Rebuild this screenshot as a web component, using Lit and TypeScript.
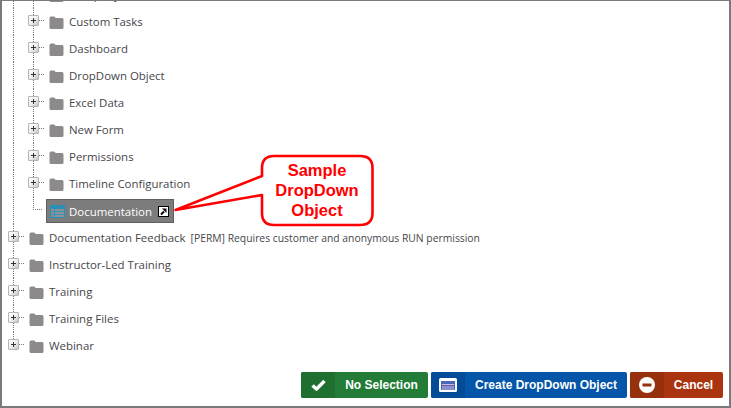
import { LitElement, html, css, svg } from "lit";
import { customElement } from "lit/decorators.js";

const folder = svg`<svg class="folder" width="15" height="13" viewBox="0 0 15 13"><path d="M0.5 2 Q0.5 0.5 2 0.5 H5 Q6 0.5 6.5 2 H13 Q14.5 2 14.5 3.5 V11.5 Q14.5 13 13 13 H2 Q0.5 13 0.5 11.5 Z" fill="#8c8a8b"/></svg>`;

type Row = { label: string; level: 0 | 1; note?: string; last?: boolean };

const rows: Row[] = [
  { label: "Company", level: 1 },
  { label: "Custom Tasks", level: 1 },
  { label: "Dashboard", level: 1 },
  { label: "DropDown Object", level: 1 },
  { label: "Excel Data", level: 1 },
  { label: "New Form", level: 1 },
  { label: "Permissions", level: 1 },
  { label: "Timeline Configuration", level: 1 },
];
const topRows: Row[] = [
  { label: "Documentation Feedback", level: 0, note: "[PERM] Requires customer and anonymous RUN permission" },
  { label: "Instructor-Led Training", level: 0 },
  { label: "Training", level: 0 },
  { label: "Training Files", level: 0 },
  { label: "Webinar", level: 0, last: true },
];

@customElement("app-root")
export class AppRoot extends LitElement {
  static styles = css`
    :host { display: block; width: 731px; height: 408px; }
    .frame {
      box-sizing: border-box; width: 731px; height: 408px; background: #fff; overflow: hidden;
      border: solid #7a7a7a; border-width: 1px 2px 2px 2px;
      position: relative; display: flex; flex-direction: column;
      font-family: "Open Sans", "Noto Sans", sans-serif; font-size: 11.45px; color: #46464a;
    }
    .tree { flex: 1; margin: -20px 0 0 -1px; }
    .row { display: flex; align-items: center; height: 27px; }
    .guide { width: 20px; height: 27px; flex: none; box-sizing: border-box; }
    .line {
      background-image: repeating-linear-gradient(to bottom, #777 0 1px, transparent 1px 2px);
      background-repeat: no-repeat; background-size: 1px 100%; background-position: 12px 0;
    }
    .conn {
      position: relative; flex: none; width: 28px; height: 27px;
      background-image:
        repeating-linear-gradient(to bottom, #777 0 1px, transparent 1px 2px),
        repeating-linear-gradient(to right, #777 0 1px, transparent 1px 2px);
      background-repeat: no-repeat;
      background-size: 1px 100%, 12px 1px;
      background-position: 12px 0, 12px 12px;
    }
    .conn.last { background-size: 1px 13px, 12px 1px; }
    .exp {
      position: absolute; left: 7px; top: 7px; width: 11px; height: 11px; box-sizing: border-box;
      border: 1px solid #b5b5b5; border-radius: 1px;
      background: linear-gradient(135deg, #ffffff 0%, #f0f0f0 50%, #c4c4c4 100%);
    }
    .exp::before { content: ""; position: absolute; left: 2px; top: 4px; width: 5px; height: 1px; background: #333; }
    .exp::after { content: ""; position: absolute; left: 4px; top: 2px; width: 1px; height: 5px; background: #333; }
    .folder { flex: none; margin: 1px 5px 0 0; display: block; }
    .label { white-space: nowrap; }
    .note { margin-left: 5px; font-size: 10.35px; white-space: nowrap; }

    .sel {
      display: flex; align-items: center; box-sizing: border-box; height: 24px; width: 128px;
      align-self: flex-start; margin: 2px 0 0 4px; padding-left: 3px;
      background: #7c7c7c; border: 1px solid #5f5f5f; color: #fff; flex: none;
    }
    .sel .tbl { margin-right: 4px; flex: none; display: block; }
    .sel .sc { margin-left: 6px; flex: none; display: block; }
    .elbow {
      flex: none; width: 21px; height: 27px;
      background-image:
        repeating-linear-gradient(to bottom, #777 0 1px, transparent 1px 2px),
        repeating-linear-gradient(to right, #777 0 1px, transparent 1px 2px);
      background-repeat: no-repeat;
      background-size: 1px 13px, 12px 1px;
      background-position: 12px 0, 12px 12px;
    }

    .bar { display: flex; justify-content: flex-end; gap: 3px; padding: 0 6px 8px 0; flex: none; }
    .btn {
      display: flex; align-items: stretch; height: 26px; border-radius: 2px; overflow: hidden;
      font: bold 12px "Liberation Sans", Arial, sans-serif; color: #fff;
    }
    .ic { width: 34px; display: flex; align-items: center; justify-content: center; flex: none; }
    .tx { flex: 1; display: flex; align-items: center; justify-content: center; white-space: nowrap; }
    .green { width: 127px; background: #237b38; } .green .ic { background: #1f6f31; }
    .blue { width: 196px; background: #0556a8; } .blue .ic { background: #044c97; }
    .red { width: 93px; background: #a9340e; } .red .ic { background: #97300d; }

    .callout { position: absolute; left: 171px; top: 152px; width: 204px; height: 76px; }
    .callout svg { position: absolute; inset: 0; display: block; }
    .ctext {
      position: absolute; left: 88px; top: 7px; width: 112px; text-align: center;
      font: bold 16.5px/20px "Liberation Sans", Arial, sans-serif; color: #f00;
    }
  `;

  private renderRow(r: Row) {
    return html`<div class="row">
      ${r.level === 1 ? html`<div class="guide line"></div>` : null}
      <div class="conn ${r.last ? "last" : ""}"><div class="exp"></div></div>
      ${folder}
      <span class="label">${r.label}</span>
      ${r.note ? html`<span class="note">${r.note}</span>` : null}
    </div>`;
  }

  render() {
    return html`<div class="frame">
      <div class="tree">
        ${rows.map((r) => this.renderRow(r))}
        <div class="row">
          <div class="guide line"></div>
          <div class="elbow"></div>
          <div class="sel">
            <svg class="tbl" width="15" height="13" viewBox="0 0 15 13">
              <rect x="0" y="0" width="15" height="13" fill="#2b8fb5"/>
              <rect x="1" y="4" width="13" height="8" fill="#8a9298"/>
              <path d="M1 6.5H14M1 9.5H14M4.5 4V12" stroke="#3a94b5" stroke-width="1"/>
            </svg>
            <span class="label">Documentation</span>
            <svg class="sc" width="11" height="11" viewBox="0 0 11 11">
              <rect x="0" y="0" width="11" height="11" fill="#000"/>
              <rect x="1" y="1" width="9" height="9" fill="#fff"/>
              <path d="M3 8.5 L6 5.5" stroke="#000" stroke-width="2"/>
              <path d="M4 2.5 H8.5 V7 Z" fill="#000"/>
            </svg>
          </div>
        </div>
        ${topRows.map((r) => this.renderRow(r))}
      </div>
      <div class="bar">
        <div class="btn green">
          <div class="ic"><svg width="15" height="12" viewBox="0 0 15 12"><path d="M1.5 6.5 L5.5 10 L13.5 2" fill="none" stroke="#fff" stroke-width="3.4"/></svg></div>
          <div class="tx">No Selection</div>
        </div>
        <div class="btn blue">
          <div class="ic"><svg width="18" height="14" viewBox="0 0 18 14">
            <rect x="0" y="0" width="18" height="14" rx="1.5" fill="#fff"/>
            <rect x="2" y="3" width="14" height="9" fill="#4a68b8"/>
            <path d="M3 6.5H15M3 9H15M3 11H15" stroke="#d9b8e0" stroke-width="1"/>
          </svg></div>
          <div class="tx">Create DropDown Object</div>
        </div>
        <div class="btn red">
          <div class="ic"><svg width="16" height="16" viewBox="0 0 16 16"><circle cx="8" cy="8" r="8" fill="#fff"/><rect x="3.5" y="6.5" width="9" height="3" fill="#97300d"/></svg></div>
          <div class="tx">Cancel</div>
        </div>
      </div>
      <div class="callout">
        <svg viewBox="0 0 204 76" width="204" height="76">
          <path d="M101 3 H187 Q199.5 3 199.5 15 V60 Q199.5 72 187 72 H101 Q89 72 89 60 V42 L2.5 57 L89 23 V15 Q89 3 101 3 Z" fill="#fff" stroke="#f00" stroke-width="2.6" stroke-linejoin="round"/>
        </svg>
        <div class="ctext">Sample<br />DropDown<br />Object</div>
      </div>
    </div>`;
  }
}
